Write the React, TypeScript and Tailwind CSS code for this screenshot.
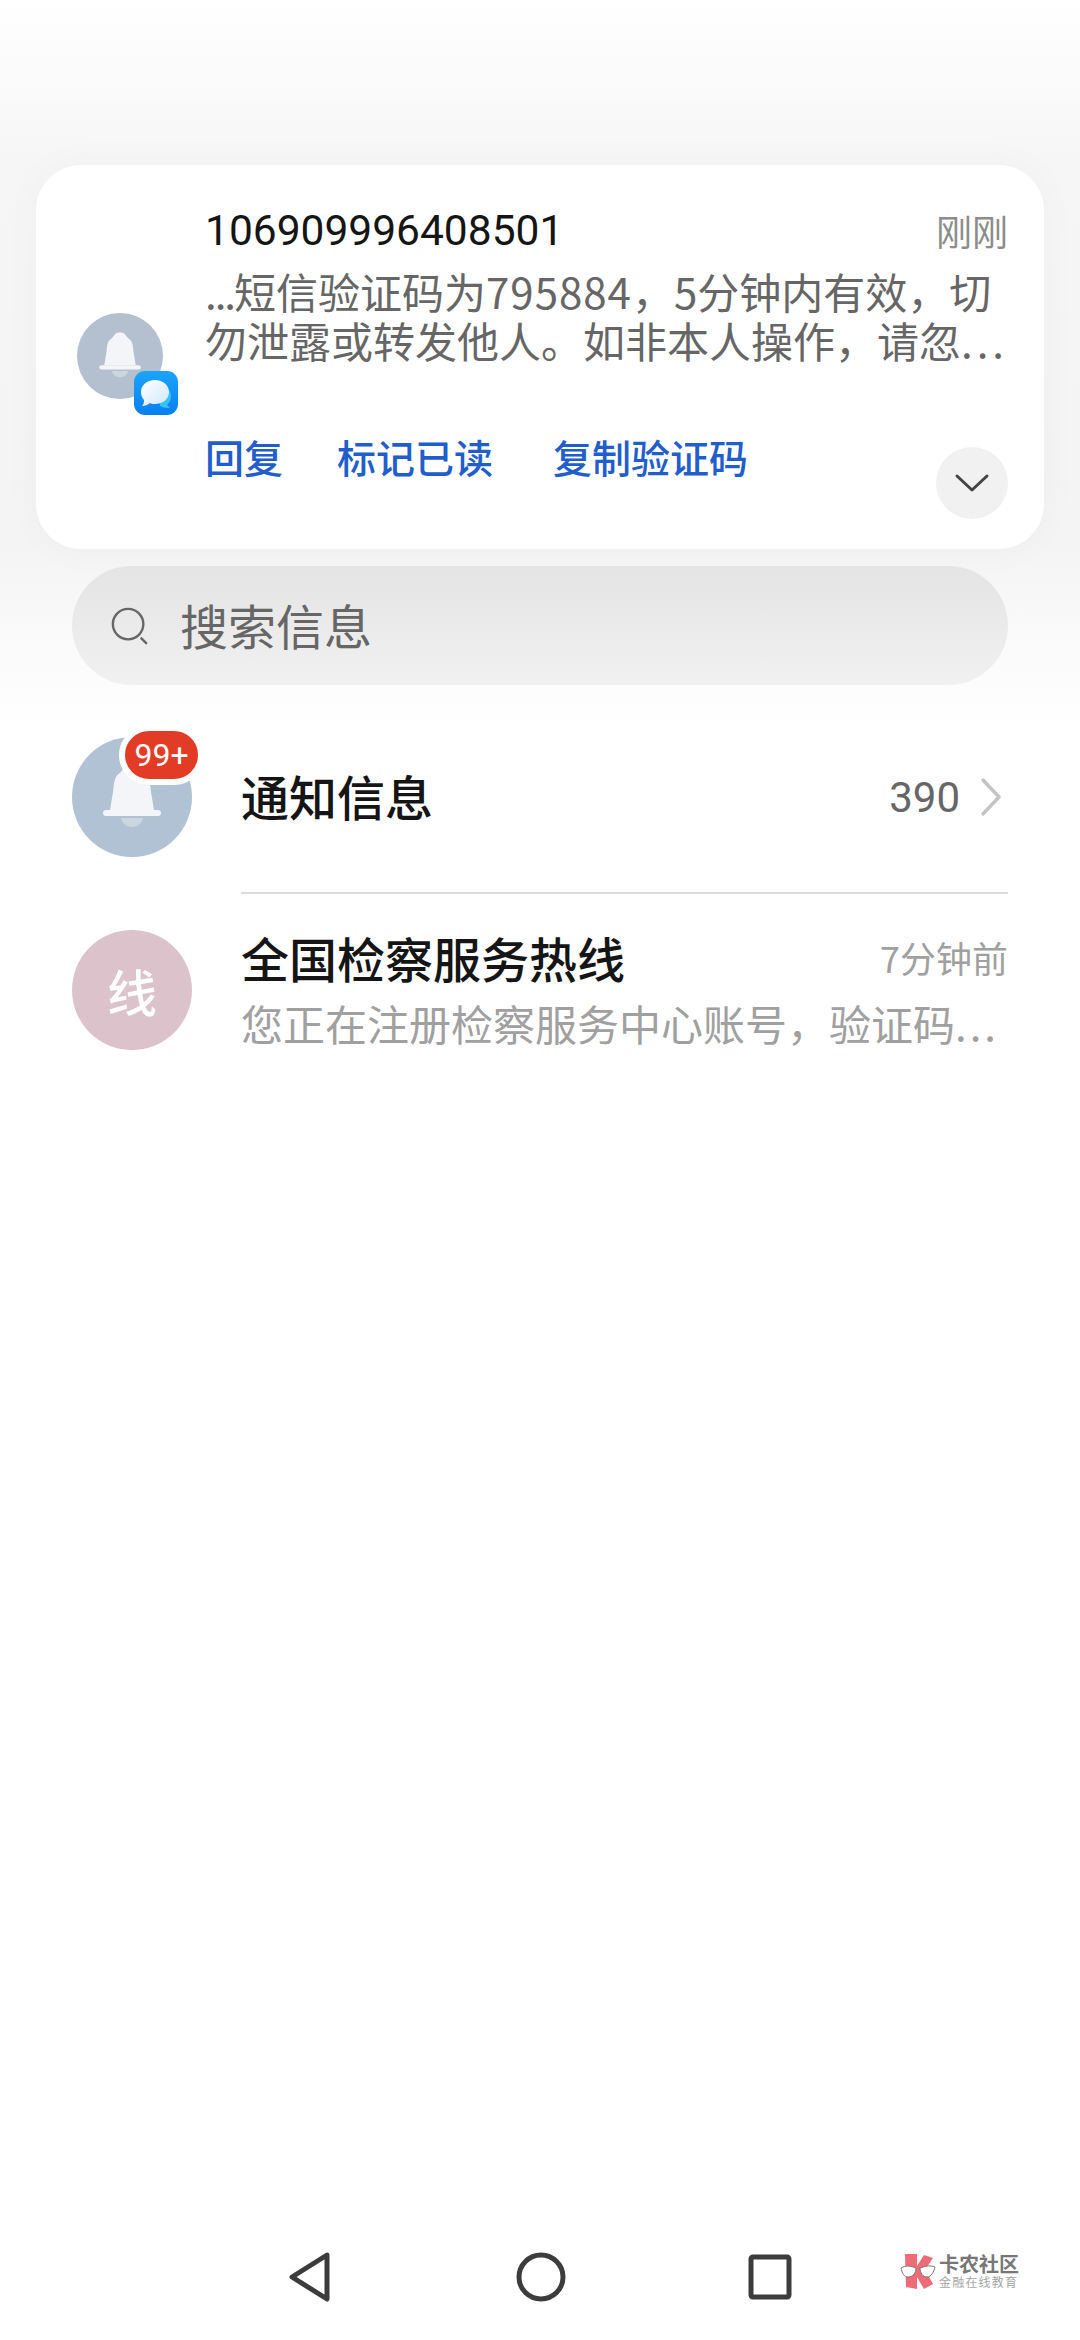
const cjk = "font-['Noto_Sans_CJK_SC','Noto_Sans',sans-serif]";

// bell glyph used by both notification avatars, drawn on a 120 unit circle
const BellAvatar = ({className, fill}: { className: string, fill: string }) => {
    return (
        <svg viewBox="0 0 120 120" className={className}>
            <circle cx="60" cy="60" r="60" fill={fill}/>
            <path d="M60 27C54 27 52 31 49 35C42 39 42 46 41 55L38 73H82L79 55C78 46 78 39 71 35C68 31 66 27 60 27Z" fill="#f3f5f8"/>
            <rect x="31" y="73" width="58" height="6" rx="3" fill="#f3f5f8"/>
            <path d="M49 81H71C70 87 65 90 60 90C55 90 50 87 49 81Z" fill="#cbd6e1"/>
        </svg>
    );
};

const MessagesBadge = () => {
    return (
        <svg viewBox="0 0 44 44" className="absolute left-[57px] top-[58px] h-[44px] w-[44px]">
            <defs>
                <linearGradient id="tile" x1="0" y1="0" x2="0" y2="1">
                    <stop offset="0" stopColor="#1aa5fb"/>
                    <stop offset="1" stopColor="#0a7ff0"/>
                </linearGradient>
                <linearGradient id="bubble" x1="0" y1="0" x2="1" y2="1">
                    <stop offset="0" stopColor="#ffffff"/>
                    <stop offset="1" stopColor="#cfe8fb"/>
                </linearGradient>
            </defs>
            <rect width="44" height="44" rx="11" fill="url(#tile)"/>
            <path d="M24 14C32 14 37 19 37 25C37 29 35 32 33 34L36 37C31 37 28 36 26 35Z" fill="#35c4f4"/>
            <path d="M21 9C29 9 35 14 35 21C35 28 29 33 21 33C19 33 17 33 16 32C14 34 11 35 8 35C10 33 10 31 10 29C8 27 7 24 7 21C7 14 13 9 21 9Z" fill="url(#bubble)"/>
        </svg>
    );
};

const NotificationCard = () => {
    return (
        <div className="mx-9 flex rounded-[45px] bg-white shadow-[0_0_40px_rgba(0,0,0,0.03)]">
            <div className="relative ml-[41px] mt-[148px] h-[86px] w-[86px] shrink-0">
                <BellAvatar className="h-[86px] w-[86px]" fill="#b4c0cf"/>
                <MessagesBadge/>
            </div>
            <div className="ml-[42px] mr-[37px] flex-1 pt-10">
                <div className="flex h-[50px] items-center justify-between">
                    <span className="pt-[2px] font-['Roboto',sans-serif] text-[42.5px] text-[#151515]">106909996408501</span>
                    <span className="text-[36px] text-[#8c8c8c]">刚刚</span>
                </div>
                <p className="mt-[11px] text-[42px] leading-[49px] whitespace-nowrap text-[#666666]">
                    <span className="tracking-[-2px]">...</span>短信验证码为<span className="tracking-[1px]">795884</span>，5分钟内有效，切<br/>勿泄露或转发他人。如非本人操作，请忽<span className="tracking-[4px]">...</span>
                </p>
                <div className="mt-[68px] flex items-start justify-between pb-[30px]">
                    <div className="flex h-12 items-center text-[39px] font-medium text-[#1f5ecb]">
                        <span>回复</span>
                        <span className="ml-[54px]">标记已读</span>
                        <span className="ml-[60px]">复制验证码</span>
                    </div>
                    <div className="mt-[15px] flex h-[72px] w-[72px] items-center justify-center rounded-full bg-[#f1f1f1]">
                        <svg viewBox="0 0 36 22" className="h-[22px] w-[36px]" fill="none" stroke="#444444" strokeWidth="3" strokeLinecap="round" strokeLinejoin="round">
                            <path d="M3 4L18 18L33 4"/>
                        </svg>
                    </div>
                </div>
            </div>
        </div>
    );
};

const SearchBar = () => {
    return (
        <div className="mx-[72px] mt-[17px] flex h-[119px] items-center rounded-[60px] bg-gradient-to-b from-[#e4e4e4] to-[#f1f1f1] pl-[38px]">
            <svg viewBox="0 0 42 42" className="h-[40px] w-[40px]" fill="none" stroke="#666666" strokeWidth="2.5" strokeLinecap="round">
                <circle cx="19" cy="19" r="16"/>
                <path d="M33 34L38 39"/>
            </svg>
            <span className="ml-[30px] pb-[3px] text-[48px] text-[#666666]">搜索信息</span>
        </div>
    );
};

const NotifyRow = () => {
    return (
        <div className="mx-[72px] mt-[52px] flex h-[120px] items-center pr-[6px]">
            <div className="relative h-[120px] w-[120px] shrink-0">
                <BellAvatar className="h-[120px] w-[120px]" fill="#b0c2d3"/>
                <span className="absolute left-[47px] top-[-12px] flex h-[60px] w-[85px] items-center justify-center rounded-[30px] border-[6px] border-white bg-[#e33c26] font-['Roboto',sans-serif] text-[32px] text-white">99+</span>
            </div>
            <span className="ml-[49px] flex-1 pb-[4px] text-[48px] font-medium text-[#151515]">通知信息</span>
            <span className="font-['Roboto',sans-serif] text-[42px] text-[#666666]">390</span>
            <svg viewBox="0 0 22 40" className="ml-[20px] h-[40px] w-[22px]" fill="none" stroke="#c4c4c4" strokeWidth="3.5" strokeLinecap="round" strokeLinejoin="round">
                <path d="M3 3L19 20L3 37"/>
            </svg>
        </div>
    );
};

const HotlineRow = () => {
    return (
        <div className="mx-[72px] mt-[36px] flex h-[120px]">
            <div className="flex h-[120px] w-[120px] shrink-0 items-center justify-center rounded-full bg-[#dcc3cb] text-[50px] font-medium text-white">线</div>
            <div className="ml-[49px] flex-1">
                <div className="flex h-[53px] items-center justify-between">
                    <span className="text-[48px] font-medium text-[#151515]">全国检察服务热线</span>
                    <span className="text-[36px] text-[#a0a0a0]">7分钟前</span>
                </div>
                <p className="mt-[12px] text-[42px] leading-[56px] whitespace-nowrap text-[#a0a0a0]">您正在注册检察服务中心账号，验证码<span className="tracking-[3px]">...</span></p>
            </div>
        </div>
    );
};

const NavBar = () => {
    return (
        <div className="relative mt-auto flex h-[118px] items-start justify-center pt-[30px]">
            <div className="flex items-center">
                <svg viewBox="0 0 44 50" className="h-[50px] w-[44px]" fill="none" stroke="#3c3c3c" strokeWidth="5" strokeLinejoin="round">
                    <path d="M39 3L4 25L39 47Z"/>
                </svg>
                <svg viewBox="0 0 50 50" className="ml-[184px] h-[50px] w-[50px]" fill="none" stroke="#3c3c3c" strokeWidth="5">
                    <circle cx="25" cy="25" r="22"/>
                </svg>
                <svg viewBox="0 0 44 46" className="ml-[182px] h-[46px] w-[44px]" fill="none" stroke="#3c3c3c" strokeWidth="5" strokeLinejoin="round">
                    <rect x="3" y="3" width="38" height="40" rx="2"/>
                </svg>
            </div>
            {/* watermark sits over the nav bar */}
            <div className="absolute left-[900px] top-[31px] flex items-center">
                <svg viewBox="0 0 36 36" className="h-[36px] w-[36px]">
                    <path d="M5 1H17V13L24 2L33 5L25 17L33 31L24 36L17 24V36L6 34Z" fill="#ee6b78"/>
                    <path d="M1 15C6 12 11 13 16 15C16 20 13 24 8 24C4 24 2 20 1 15ZM35 14C30 12 25 13 20 15C20 20 23 24 27 24C31 24 34 19 35 14Z" fill="#ffffff" stroke="#777777" strokeWidth="1"/>
                </svg>
                <div className="ml-[3px] flex flex-col text-[#777777]">
                    <span className="text-[20px] leading-[22px] font-bold">卡农社区</span>
                    <span className="text-[12px] leading-[14px] tracking-[1.2px] text-[#a5a5a5]">金融在线教育</span>
                </div>
            </div>
        </div>
    );
};

export default function App() {
    return (
        <div className={`${cjk} flex h-[2340px] w-[1080px] flex-col overflow-hidden bg-[linear-gradient(180deg,#ffffff_0px,#f6f6f6_165px,#f4f4f4_540px,#fafafa_640px,#ffffff_730px)] pt-[165px]`}>
            <NotificationCard/>
            <SearchBar/>
            <NotifyRow/>
            <div className="ml-[241px] mr-[72px] mt-[35px] h-[2px] bg-[#dcdcdc]"/>
            <HotlineRow/>
            <NavBar/>
        </div>
    );
}
